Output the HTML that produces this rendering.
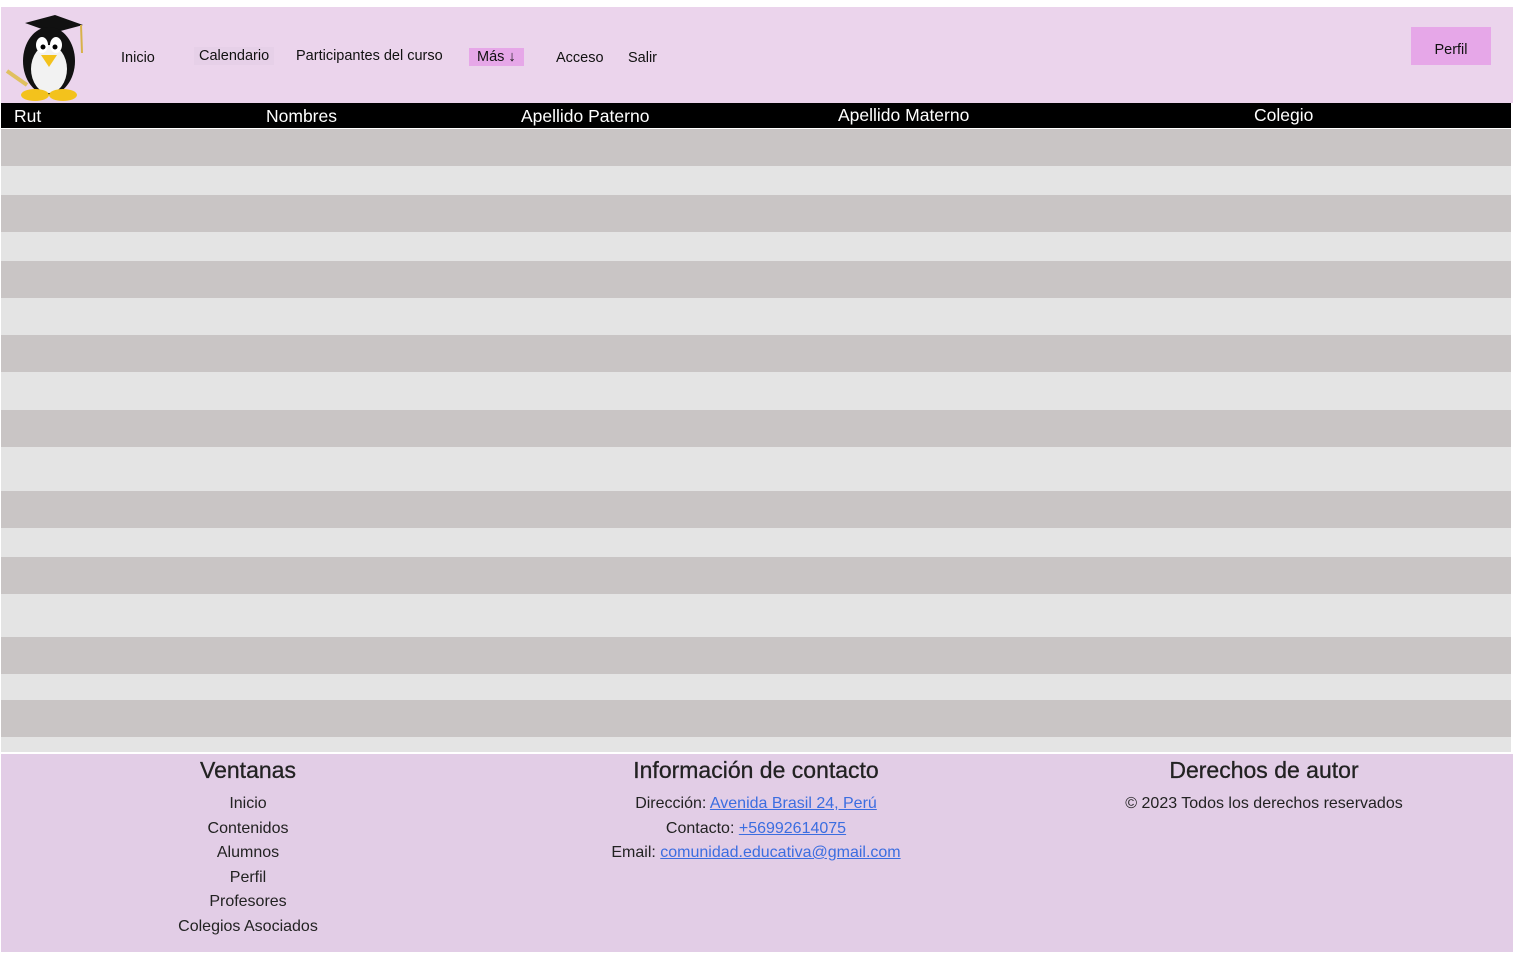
<!DOCTYPE html>
<html><head><meta charset="utf-8"><style>
body{margin:0;background:#fff;width:1516px;height:954px;position:relative;overflow:hidden;font-family:"Liberation Sans",sans-serif;}
.hdr{position:absolute;left:1px;top:7px;width:1512px;height:96px;background:#ebd4ec;}
.n{position:absolute;font-size:14.5px;color:#111;}
.th{position:absolute;left:1px;top:103px;width:1510px;height:25px;background:#000;color:#fff;font-size:17.5px;}
.th span{position:absolute;top:3px}
.r{position:absolute;left:1px;width:1510px;}
.d{background:#c9c5c5}.l{background:#e4e4e4}
.ft{position:absolute;left:1px;top:754px;width:1512px;height:198px;background:#e2cde6;color:#222;}
.c{position:absolute;text-align:center;font-size:16px;line-height:24.5px}
.c h2{font-size:23px;font-weight:normal;margin:0 0 6px;line-height:32px;color:#222;-webkit-text-stroke:0.3px #222}
a{color:#3b6de0;text-decoration:underline}
</style></head><body>
<div class="hdr">
<svg style="position:absolute;left:4px;top:6px" width="86" height="88" viewBox="0 0 86 88">
<polygon points="20,10 50,2 78,12 48,20" fill="#111"/>
<line x1="76" y1="12" x2="77" y2="40" stroke="#d8b24a" stroke-width="2"/>
<ellipse cx="44" cy="48" rx="26" ry="34" fill="#111"/>
<ellipse cx="44" cy="56" rx="18" ry="24" fill="#f2f2f2"/>
<ellipse cx="37" cy="32" rx="6" ry="8" fill="#fff"/><ellipse cx="51" cy="32" rx="6" ry="8" fill="#fff"/>
<circle cx="38" cy="34" r="2.5" fill="#000"/><circle cx="50" cy="34" r="2.5" fill="#000"/>
<polygon points="36,42 52,42 44,54" fill="#f3c21c"/>
<line x1="2" y1="58" x2="22" y2="72" stroke="#e0c060" stroke-width="4"/>
<ellipse cx="30" cy="82" rx="14" ry="6" fill="#f3c21c"/><ellipse cx="58" cy="82" rx="14" ry="6" fill="#f3c21c"/>
</svg>
<span class="n" style="left:120px;top:43px">Inicio</span>
<span class="n" style="left:193px;top:40px;background:#e6d0e8;padding:1px 5px">Calendario</span>
<span class="n" style="left:295px;top:41px">Participantes del curso</span>
<span class="n" style="left:468px;top:41px;background:#e6a7e8;padding:1px 8px">Más ↓</span>
<span class="n" style="left:555px;top:43px">Acceso</span>
<span class="n" style="left:627px;top:43px">Salir</span>
<span class="n" style="left:1410px;top:20px;width:80px;height:38px;background:#e6a7e8;line-height:46px;text-align:center">Perfil</span>
</div>
<div class="th"><span style="left:13px">Rut</span><span style="left:265px">Nombres</span><span style="left:520px">Apellido Paterno</span><span style="left:837px;top:2px">Apellido Materno</span><span style="left:1253px;top:2px">Colegio</span></div>
<div class="r d" style="top:129px;height:37px"></div><div class="r l" style="top:166px;height:29px"></div>
<div class="r d" style="top:195px;height:37px"></div><div class="r l" style="top:232px;height:29px"></div>
<div class="r d" style="top:261px;height:37px"></div><div class="r l" style="top:298px;height:37px"></div>
<div class="r d" style="top:335px;height:37px"></div><div class="r l" style="top:372px;height:38px"></div>
<div class="r d" style="top:410px;height:37px"></div><div class="r l" style="top:447px;height:44px"></div>
<div class="r d" style="top:491px;height:37px"></div><div class="r l" style="top:528px;height:29px"></div>
<div class="r d" style="top:557px;height:37px"></div><div class="r l" style="top:594px;height:43px"></div>
<div class="r d" style="top:637px;height:37px"></div><div class="r l" style="top:674px;height:26px"></div>
<div class="r d" style="top:700px;height:37px"></div><div class="r l" style="top:737px;height:15px"></div>
<div class="ft">
<div class="c" style="left:97px;width:300px;top:0"><h2>Ventanas</h2>Inicio<br>Contenidos<br>Alumnos<br>Perfil<br>Profesores<br>Colegios Asociados</div>
<div class="c" style="left:505px;width:500px;top:0"><h2>Información de contacto</h2>Dirección: <a>Avenida Brasil 24, Perú</a><br>Contacto: <a>+56992614075</a><br>Email: <a>comunidad.educativa@gmail.com</a></div>
<div class="c" style="left:1063px;width:400px;top:0"><h2>Derechos de autor</h2>© 2023 Todos los derechos reservados</div>
</div>
</body></html>
